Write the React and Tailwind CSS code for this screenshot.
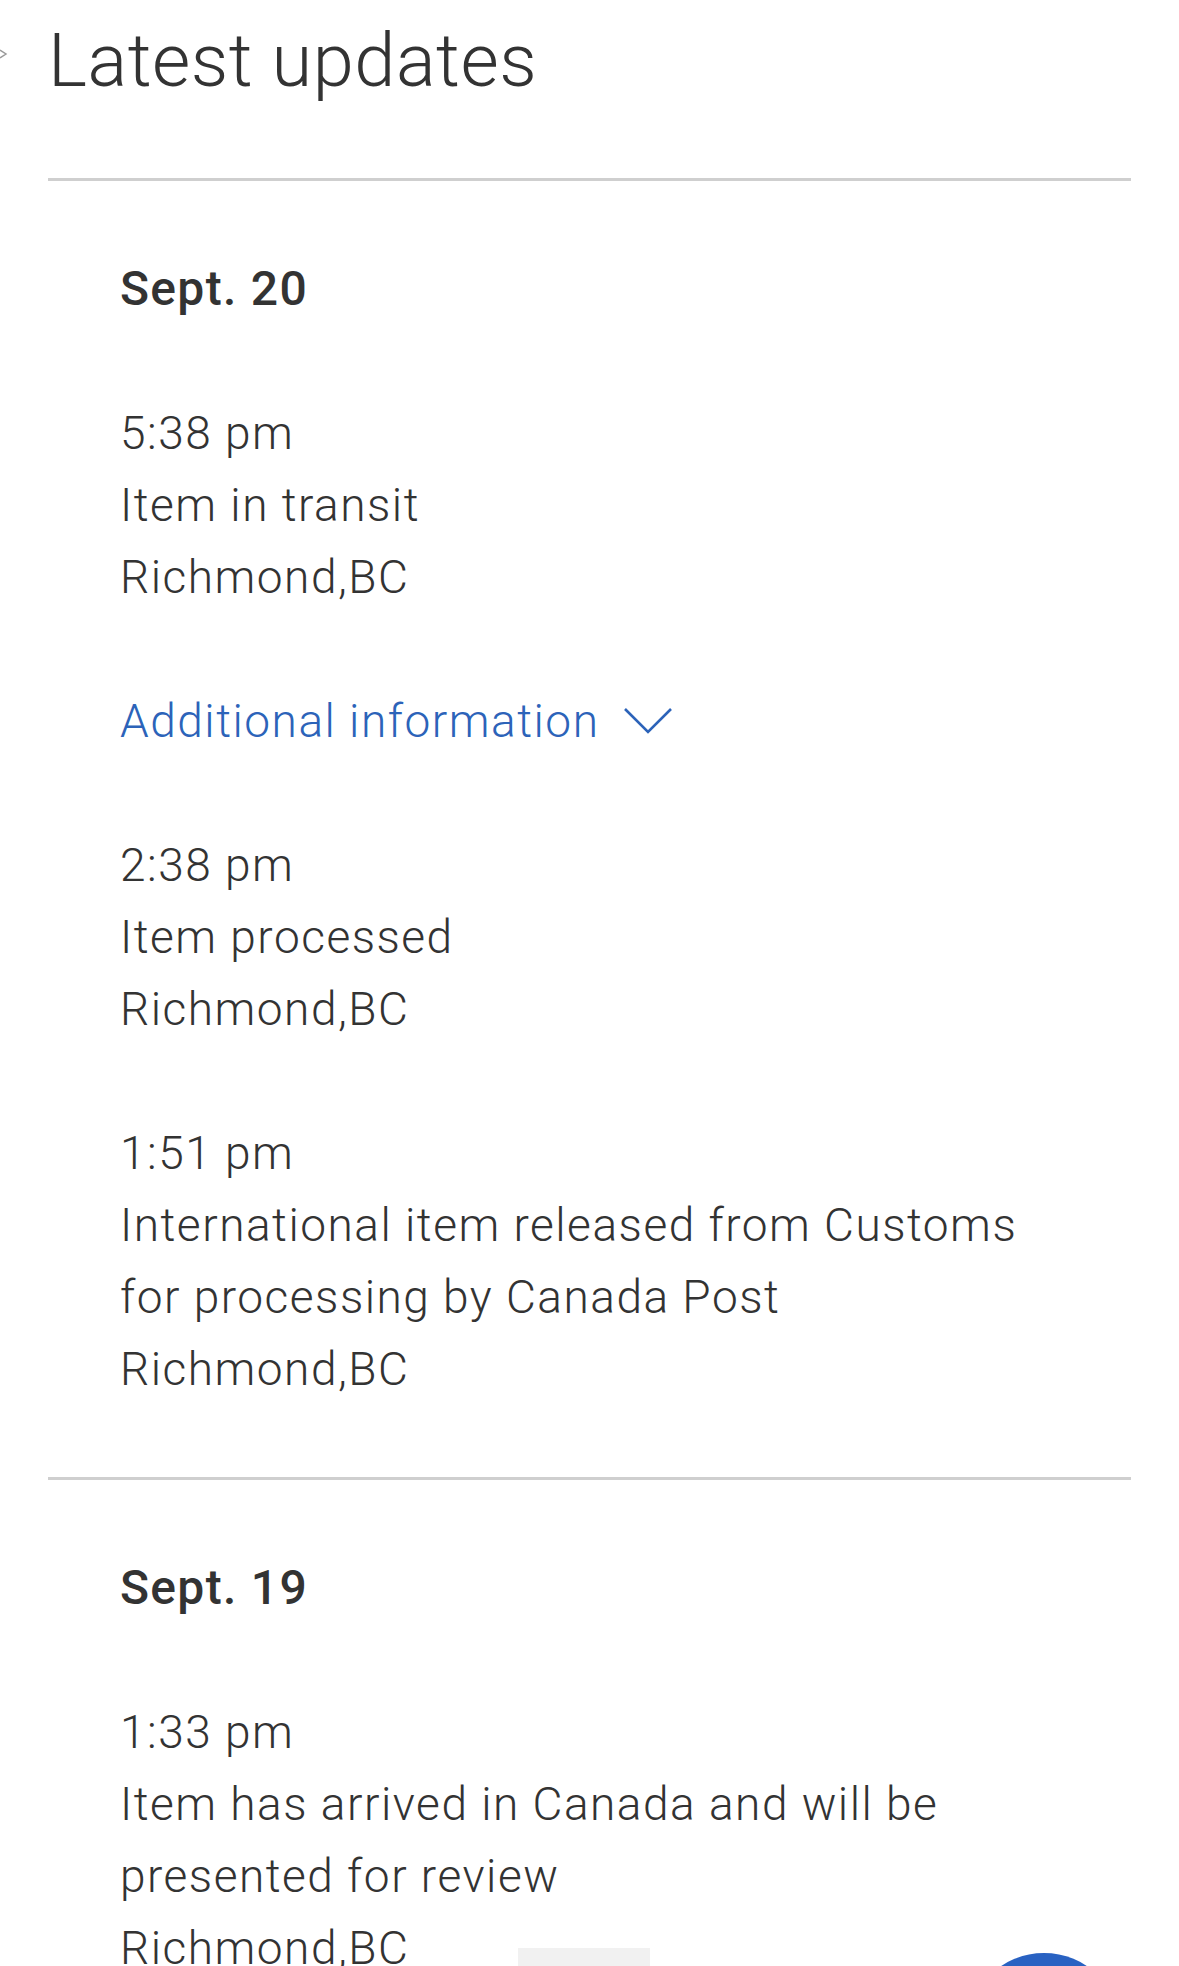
import { Fragment } from "react";

const days = [
  {
    date: "Sept. 20",
    events: [
      { time: "5:38 pm", text: "Item in transit", place: "Richmond,BC", more: true },
      { time: "2:38 pm", text: "Item processed", place: "Richmond,BC" },
      {
        time: "1:51 pm",
        text: "International item released from Customs for processing by Canada Post",
        place: "Richmond,BC",
      },
    ],
  },
  {
    date: "Sept. 19",
    events: [
      {
        time: "1:33 pm",
        text: "Item has arrived in Canada and will be presented for review",
        place: "Richmond,BC",
      },
    ],
  },
];

function Chevron() {
  return (
    <svg width="50" height="28" viewBox="0 0 50 28" fill="none" className="ml-[24px] shrink-0">
      <path d="M2 2 L25 25 L48 2" stroke="#2c63b9" strokeWidth="2.6" />
    </svg>
  );
}

export default function App() {
  return (
    <div
      className="relative h-[1966px] w-full overflow-hidden bg-white px-[48px] text-[#333333]"
      style={{ fontFamily: "Roboto, 'Noto Sans', sans-serif" }}
    >
      {/* cut off back arrow at the edge */}
      <svg width="8" height="12" viewBox="0 0 8 12" className="absolute left-0 top-[48px]">
        <path d="M0 2 L6 6 L0 10" stroke="#9a9a9a" strokeWidth="1.5" fill="none" />
      </svg>

      <h1 className="pt-[11px] text-[74px] font-light leading-[100px] tracking-[0.5px]">Latest updates</h1>

      <div className="mt-[67px]">
        {days.map((day) => (
          <Fragment key={day.date}>
            <div className="h-[3px] bg-[#cfcfcf]" />
            <section className="flex flex-col gap-[72px] px-[72px] py-[72px]">
              <h2 className="text-[48px] font-medium leading-[72px] tracking-[1.3px]">{day.date}</h2>
              {day.events.map((ev) => (
                <Fragment key={ev.time}>
                  <div className="text-[46px] font-light leading-[72px] tracking-[1.5px]">
                    <p>{ev.time}</p>
                    <p>{ev.text}</p>
                    <p>{ev.place}</p>
                  </div>
                  {ev.more && (
                    <button className="flex items-center text-left text-[46px] font-light leading-[72px] tracking-[1.5px] text-[#2c63b9]">
                      Additional information
                      <Chevron />
                    </button>
                  )}
                </Fragment>
              ))}
            </section>
          </Fragment>
        ))}
      </div>

      {/* bits of the floating bar peeking in at the bottom */}
      <div className="absolute left-[518px] top-[1948px] h-[40px] w-[132px] bg-[#f1f1f1]" />
      <div className="absolute left-[967px] top-[1953px] h-[154px] w-[154px] rounded-full bg-[#2962c2]" />
    </div>
  );
}
